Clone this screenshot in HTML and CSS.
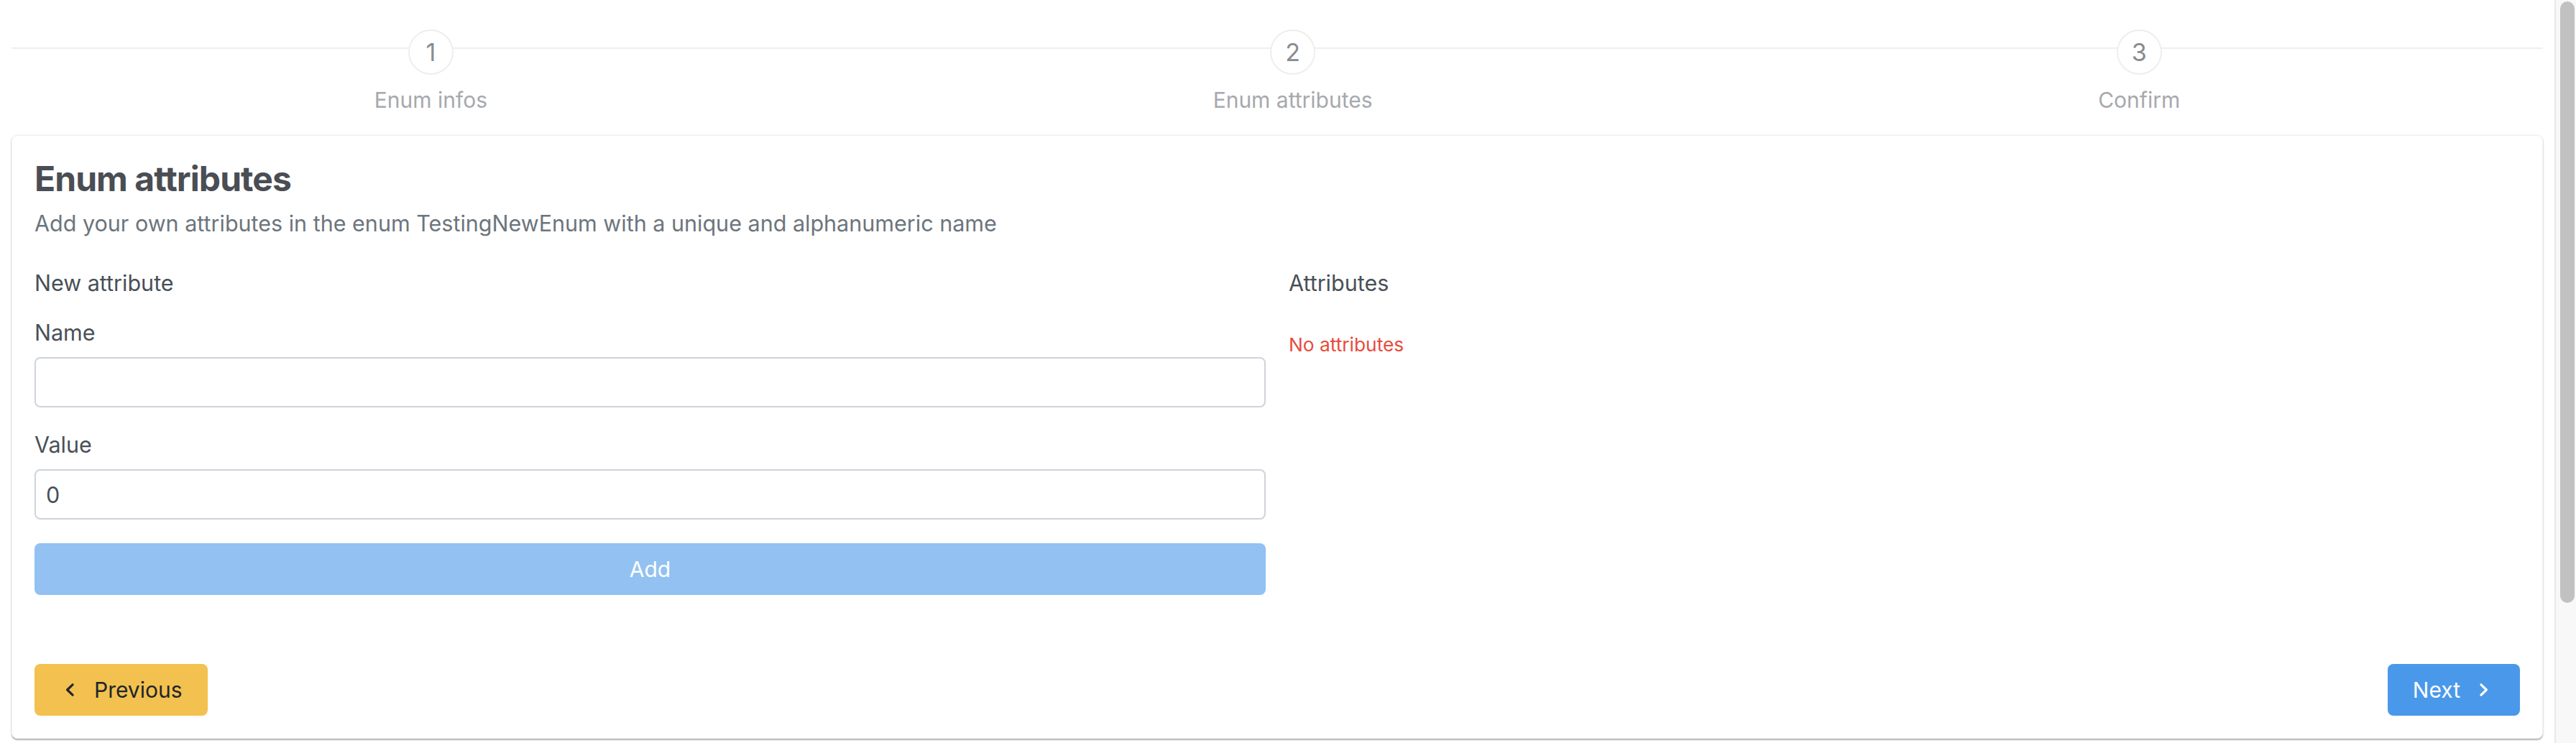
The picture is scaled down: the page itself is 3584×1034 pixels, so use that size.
FILE: index.html
```html
<!DOCTYPE html>
<html lang="en">
<head>
<meta charset="utf-8">
<title>Enum attributes</title>
<link rel="stylesheet" href="styles.css">
</head>
<body>
<div class="app">
  <div class="page">
    <div class="steps">
      <div class="step">
        <div class="step-circle">1</div>
        <div class="step-label">Enum infos</div>
      </div>
      <div class="step">
        <div class="step-circle">2</div>
        <div class="step-label">Enum attributes</div>
      </div>
      <div class="step">
        <div class="step-circle">3</div>
        <div class="step-label">Confirm</div>
      </div>
    </div>

    <div class="card">
      <h4 class="card-title">Enum attributes</h4>
      <p class="card-desc">Add your own attributes in the enum TestingNewEnum with a unique and alphanumeric name</p>

      <div class="columns">
        <div class="col">
          <div class="section-title">New attribute</div>
          <label class="field-label" for="attr-name">Name</label>
          <input class="field-input" id="attr-name" type="text" value="">
          <label class="field-label field-label-value" for="attr-value">Value</label>
          <input class="field-input" id="attr-value" type="text" value="0">
          <button class="btn btn-add" type="button" disabled>Add</button>
        </div>
        <div class="col">
          <div class="section-title">Attributes</div>
          <div class="empty-text">No attributes</div>
        </div>
      </div>

      <div class="actions">
        <button class="btn btn-prev" type="button">
          <svg class="chev" width="12" height="20" viewBox="0 0 12 20" aria-hidden="true"><path d="M10 2.8 L2.6 10 L10 17.2" fill="none" stroke="currentColor" stroke-width="3.2" stroke-linecap="round" stroke-linejoin="round"/></svg>
          <span>Previous</span>
        </button>
        <button class="btn btn-next" type="button">
          <span>Next</span>
          <svg class="chev" width="12" height="20" viewBox="0 0 12 20" aria-hidden="true"><path d="M2 2.8 L9.4 10 L2 17.2" fill="none" stroke="currentColor" stroke-width="3.2" stroke-linecap="round" stroke-linejoin="round"/></svg>
        </button>
      </div>
    </div>
  </div>
  <div class="scrollbar"><div class="scroll-thumb"></div></div>
</div>
</body>
</html>
```

FILE: styles.css
```css
* { box-sizing: border-box; }
html, body { margin: 0; padding: 0; background: #fff; }
body {
  font-family: Inter, "Liberation Sans", sans-serif;
  color: #495057;
  overflow: hidden;
}
.app { display: flex; height: 1034px; }
.page { flex: 1 1 auto; padding: 0 16px; min-width: 0; }

.steps {
  display: flex;
  height: 188px;
  background: linear-gradient(#eeeeee, #eeeeee) no-repeat 0 66px / 100% 2px;
}
.step {
  flex: 1 1 auto;
  display: flex;
  flex-direction: column;
  align-items: center;
}
.step-circle {
  width: 63px;
  height: 63px;
  margin-top: 41px;
  border: 2px solid #eeeeee;
  border-radius: 50%;
  background: #fff;
  display: flex;
  align-items: center;
  justify-content: center;
  font-size: 34px;
  line-height: 40px;
  color: #888c91;
}
.step-label {
  margin-top: 15px;
  font-size: 30px;
  line-height: 40px;
  color: #a6a9ad;
}

.card {
  background: #fff;
  border: 1px solid #f1f1f1;
  border-radius: 8px;
  box-shadow: 0 2px 2px rgba(0,0,0,0.28), 0 0 4px rgba(0,0,0,0.05);
  padding: 31px;
  height: 840px;
}
.card-title {
  margin: 0;
  font-size: 48px;
  line-height: 58px;
  font-weight: 700;
  letter-spacing: -0.95px;
  color: #4a4e54;
}
.card-desc {
  margin: 11px 0 0;
  font-size: 30.5px;
  line-height: 44px;
  color: #6c757d;
}
.columns {
  display: grid;
  grid-template-columns: 1fr 1fr;
  column-gap: 32px;
  margin-top: 39px;
}
.col { display: flex; flex-direction: column; min-width: 0; }
.section-title {
  font-size: 30.5px;
  line-height: 44px;
  color: #495057;
}
.field-label {
  margin-top: 25px;
  font-size: 30.5px;
  line-height: 44px;
  color: #495057;
}
.field-label-value { margin-top: 30px; }
.field-input {
  margin-top: 12px;
  height: 70px;
  border: 2px solid #ced4da;
  border-radius: 8px;
  padding: 0 14px;
  font-family: inherit;
  font-size: 30.5px;
  color: #495057;
  background: #fff;
  outline: none;
}
.btn {
  border: 0;
  border-radius: 8px;
  height: 72px;
  font-family: inherit;
  font-size: 30px;
  display: inline-flex;
  align-items: center;
  justify-content: center;
}
.btn-add {
  margin-top: 33px;
  width: 100%;
  background: #4a98ea;
  color: #fff;
  opacity: 0.6;
}
.empty-text {
  margin-top: 44px;
  font-size: 26.3px;
  line-height: 40px;
  color: #e74c3c;
}
.actions {
  display: flex;
  justify-content: space-between;
  margin-top: 96px;
}
.btn-prev {
  background: #f3c14f;
  color: #212529;
  padding: 0 35px 0 43px;
  gap: 28px;
}
.btn-next {
  background: #4a98ea;
  color: #fff;
  padding: 0 44px 0 35px;
  gap: 27px;
}
.chev { display: block; flex: 0 0 auto; }

.scrollbar {
  flex: 0 0 30px;
  background: #f8f8f8;
  border-left: 2px solid #e8e8e8;
  padding: 2px 2px 0 6px;
}
.scroll-thumb {
  height: 837px;
  background: #c1c1c1;
  border-radius: 10px;
}
```
